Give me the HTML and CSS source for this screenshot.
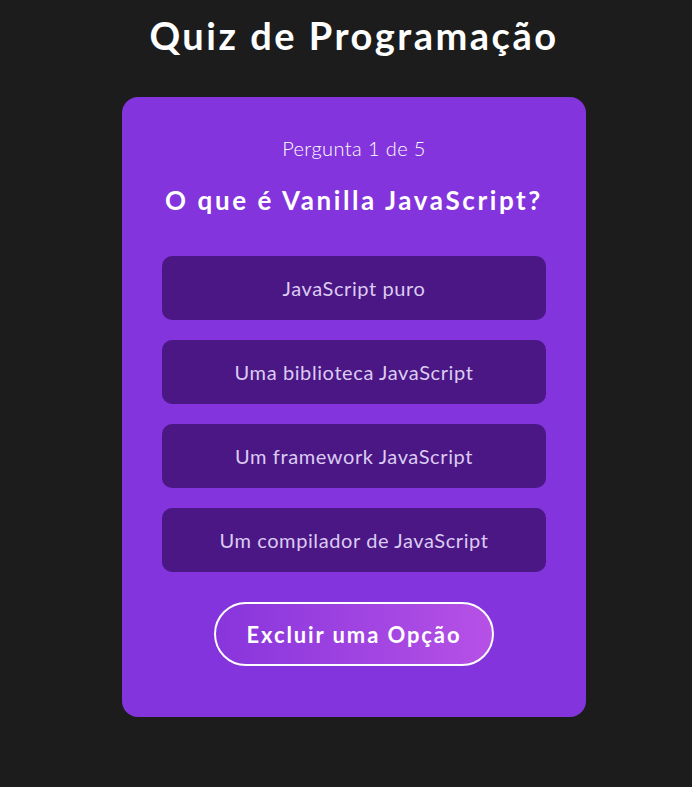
FILE: index.html
```html
<!DOCTYPE html>
<html lang="pt-BR">
<head>
<meta charset="utf-8">
<title>Quiz de Programação</title>
<link rel="stylesheet" href="styles.css">
</head>
<body>
<h1 class="title">Quiz de Programação</h1>
<main class="card">
  <p class="counter">Pergunta 1 de 5</p>
  <h2 class="question">O que é Vanilla JavaScript?</h2>
  <div class="options">
    <button class="option">JavaScript puro</button>
    <button class="option">Uma biblioteca JavaScript</button>
    <button class="option">Um framework JavaScript</button>
    <button class="option">Um compilador de JavaScript</button>
  </div>
  <button class="exclude">Excluir uma Opção</button>
</main>
</body>
</html>
```
FILE: styles.css
```css
* { box-sizing: border-box; }
html, body { margin: 0; padding: 0; }
body {
  background: #1c1c1c;
  color: #fff;
  font-family: "Lato", "Open Sans", sans-serif;
  display: flex;
  flex-direction: column;
  align-items: center;
  min-height: 787px;
  padding-left: 16px;
}
.title {
  margin: 12px 0 0;
  font-size: 38px;
  font-weight: 700;
  line-height: 46px;
  letter-spacing: 2.5px;
}
.card {
  margin-top: 39px;
  width: 464px;
  height: 620px;
  background: #8334dc;
  border-radius: 16px;
  padding: 36px 40px 40px;
  display: flex;
  flex-direction: column;
  align-items: center;
}
.counter {
  margin: 0;
  font-size: 20px;
  font-weight: 300;
  line-height: 30px;
  letter-spacing: 0.4px;
}
.question {
  margin: 20px 0 0;
  font-size: 26px;
  font-weight: 700;
  line-height: 34px;
  letter-spacing: 2.6px;
}
.options {
  margin-top: 39px;
  width: 100%;
  display: flex;
  flex-direction: column;
  gap: 20px;
}
.option {
  height: 64px;
  border: none;
  border-radius: 10px;
  background: #4a1785;
  color: #dccbf2;
  font-family: inherit;
  font-size: 20px;
  font-weight: 400;
  letter-spacing: 0.6px;
  padding-bottom: 2px;
}
.exclude {
  margin-top: 30px;
  width: 280px;
  height: 64px;
  border: 2px solid #fff;
  border-radius: 32px;
  background: linear-gradient(90deg, #8835dc, #b651e6);
  color: #fff;
  font-family: inherit;
  font-size: 22px;
  font-weight: 700;
  letter-spacing: 1.9px;
}
```
